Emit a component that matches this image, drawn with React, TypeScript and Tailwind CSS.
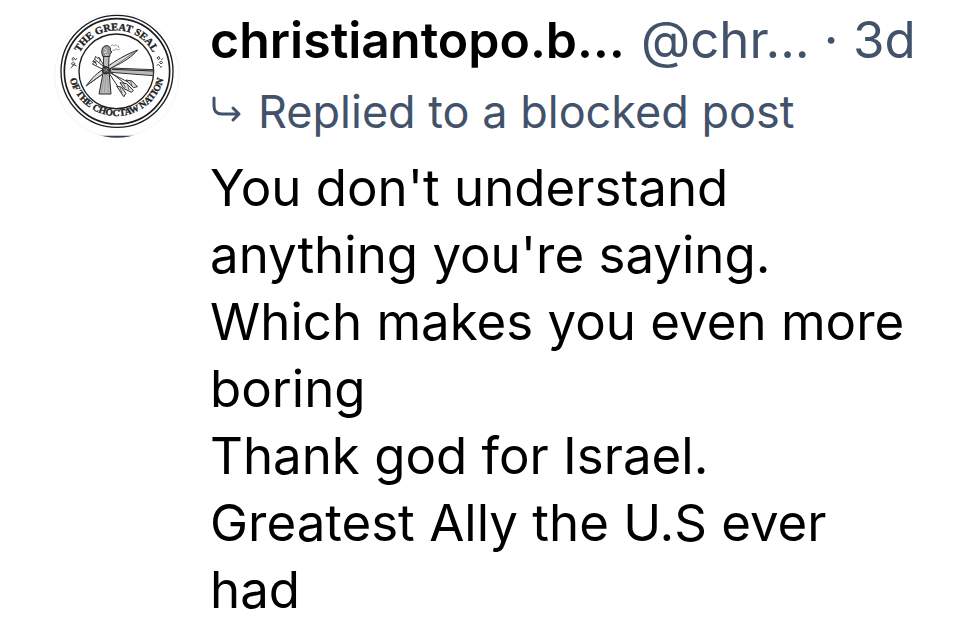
const post = {
  displayName: "christiantopo.b…",
  handle: "@chr…",
  age: "3d",
  text: "You don't understand anything you're saying.\nWhich makes you even more boring\nThank god for Israel.\nGreatest Ally the U.S ever had",
};

/** Round avatar with the seal */
function SealAvatar() {
  return (
    <svg viewBox="28 18 378 378" className="size-full" role="img" aria-label="Avatar">
      <defs>
        <clipPath id="avatarClip">
          <circle cx="217" cy="207" r="188" />
        </clipPath>
        <path id="topArc" d="M 92 196 A 123 123 0 0 1 338 196" />
        <path id="bottomArc" d="M 72 186 A 144 144 0 1 0 360 186" />
      </defs>
      <circle cx="217" cy="207" r="187" fill="#fefefe" stroke="#f0f0f0" strokeWidth="2" />
      <path d="M 146 389 H 278 V 397 H 146 Z" fill="#34404e" clipPath="url(#avatarClip)" />

      <g fill="none" stroke="#1c1c1c">
        <circle cx="217" cy="196" r="168" strokeWidth="4" />
        <circle cx="217" cy="196" r="158" strokeWidth="5" />
        <circle cx="215" cy="196" r="112" strokeWidth="4" />
      </g>

      <g fill="#202020" stroke="#202020" strokeWidth="1" fontFamily="'Liberation Serif', serif" fontWeight="700" fontSize="31">
        <text textAnchor="middle">
          <textPath href="#topArc" startOffset="50%">THE GREAT SEAL</textPath>
        </text>
        <text textAnchor="middle" fontSize="29">
          <textPath href="#bottomArc" startOffset="50%">OF THE CHOCTAW NATION</textPath>
        </text>
      </g>

      {/* side ornaments */}
      <g fill="none" stroke="#444" strokeWidth="3">
        <path d="M 82 158 q 5 -8 8 1 q -8 7 -8 -1 M 80 173 q 7 -9 11 0 q -5 9 -11 0 M 78 186 q 8 -5 10 -13 M 91 162 l 6 -5 M 88 176 l 8 4" />
        <path d="M 337 155 q 7 -8 9 2 q -6 8 -9 -2 M 344 169 q 7 -7 10 1 q -5 8 -10 -1 M 336 178 q 5 -7 11 3 M 346 184 l 6 -3 M 350 162 l 5 -5" />
      </g>

      {/* bow */}
      <path d="M 124 240 C 145 213 158 199 182 187 C 213 162 250 143 279 132 C 263 151 237 169 203 184 C 175 203 153 220 124 240 Z" fill="#ddd" stroke="#292929" strokeWidth="3" />
      <path d="M 130 235 L 276 134" stroke="#444" strokeWidth="2" />

      {/* pipe hatchet */}
      <path d="M 198 186 L 326 191 V 209 L 198 199 Z" fill="#bbb" stroke="#333" strokeWidth="3" />
      <path d="M 202 190 L 325 195" stroke="#242424" strokeWidth="3" />
      <path d="M 177 151 L 193 151 L 192 182 L 199 264 L 163 264 L 175 202 Z" fill="#bbb" stroke="#292929" strokeWidth="3" />
      <path d="M 180 203 L 170 259 M 184 205 L 179 260 M 189 207 L 191 260" stroke="#777" strokeWidth="2" strokeDasharray="4 2" />
      <path d="M 174 151 Q 167 130 178 121 Q 190 114 197 125 Q 195 133 201 138 Q 192 147 196 151 Z" fill="#999" stroke="#242424" strokeWidth="3" />
      <path d="M 179 128 l 7 6 M 178 140 l 9 -3 M 181 147 h 10" stroke="#eee" strokeWidth="3" />
      <path d="M 199 119 q 5 -6 9 1 q 5 -7 9 0 q 7 -1 5 6 M 203 132 q 7 6 10 -4 q 5 7 12 1" fill="none" stroke="#666" strokeWidth="2" />

      {/* arrows */}
      <g fill="none" stroke="#333" strokeWidth="3">
        <path d="M 150 160 L 266 253 M 143 174 L 278 242 M 161 153 L 239 271" />
        <path d="M 150 160 l 3 -9 l 8 8 M 150 160 l -6 7 l 11 1 M 143 174 l 8 -7 l 5 10 M 161 153 l 6 6 l -2 8" />
        <path d="M 226 230 L 246 233 L 266 253 L 261 259 L 238 248 Z M 244 222 L 262 225 L 278 242 L 266 245 Z M 216 240 L 230 243 L 244 262 L 237 272 Z" fill="#ddd" />
        <path d="M 237 234 l 5 12 M 249 238 l 4 14 M 226 244 l 6 17 M 258 225 l 4 16" strokeWidth="2" />
      </g>
      <circle cx="184" cy="193" r="11" fill="#454545" stroke="#202020" strokeWidth="3" />
      <path d="M 176 188 l 15 9 M 179 198 l 10 -12" stroke="#aaa" strokeWidth="2" />
    </svg>
  );
}

function ReplyArrow() {
  return (
    <svg viewBox="0 0 32 32" className="size-8 shrink-0" fill="none" stroke="currentColor" strokeWidth="3" strokeLinecap="round" strokeLinejoin="round" aria-hidden="true">
      <path d="M 4 2 V 10 Q 4 18 12 18 H 29 M 23 12 L 29 18 L 23 24" />
    </svg>
  );
}

export default function App() {
  return (
    <main className="min-h-screen bg-white font-['Inter',sans-serif] text-black">
      <article className="flex items-start gap-[30px] pt-1.5 pr-11 pl-[54px]">
        <div className="mt-1.5 size-[126px] shrink-0">
          <SealAvatar />
        </div>
        <div className="min-w-0 flex-1">
          <header className="flex items-baseline gap-4 text-[50px] leading-[67px] whitespace-nowrap">
            <h1 className="font-semibold">{post.displayName}</h1>
            <p className="text-[51px] text-[#42526a]">
              {post.handle} · {post.age}
            </p>
          </header>
          <p className="flex items-center gap-4 text-[45px] leading-[76px] text-[#42526a]">
            <ReplyArrow />
            Replied to a blocked post
          </p>
          <p className="mt-1 text-[51px] leading-[67px] whitespace-pre-line">{post.text}</p>
        </div>
      </article>
    </main>
  );
}
